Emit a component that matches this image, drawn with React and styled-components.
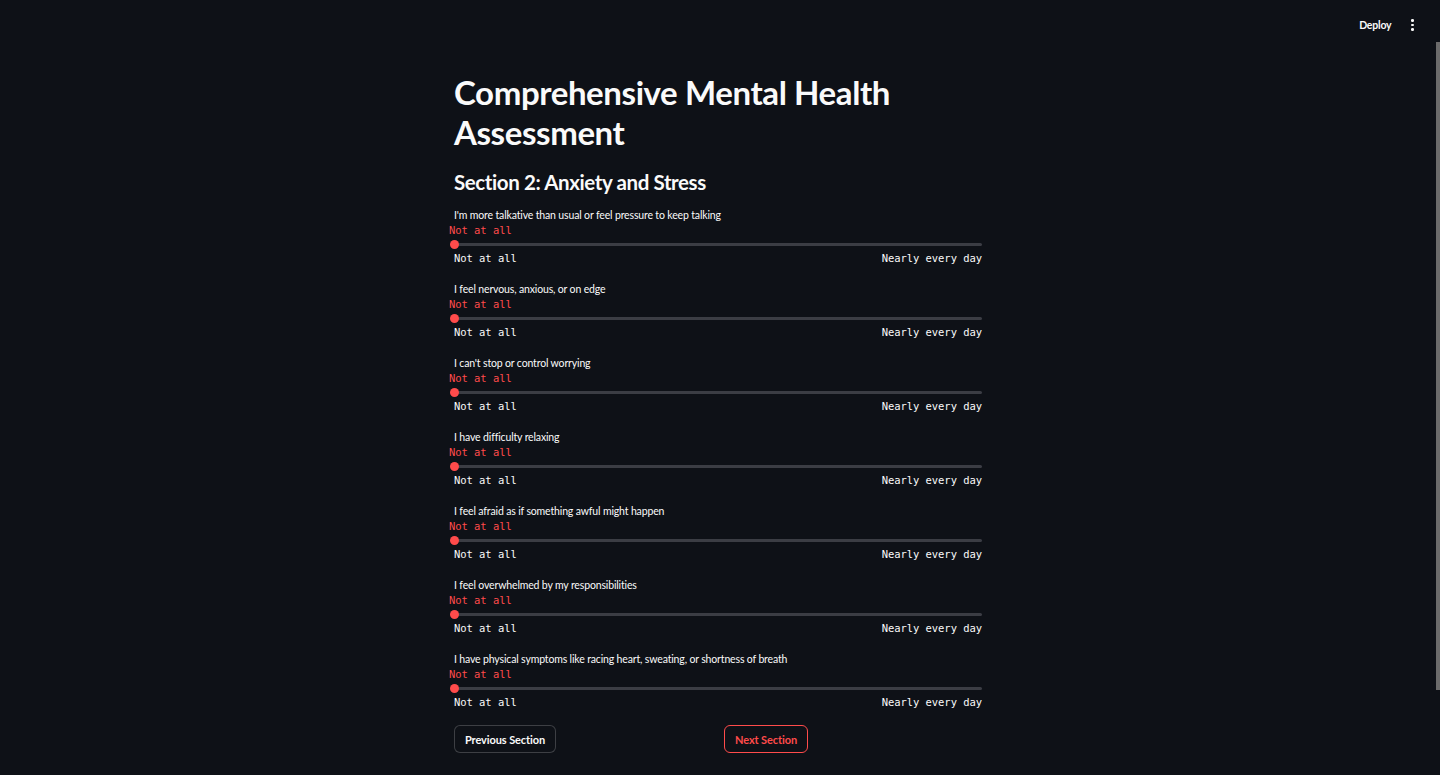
import React from "react";
import styled, { createGlobalStyle } from "styled-components";

const GlobalStyle = createGlobalStyle`
  html, body {
    margin: 0;
    padding: 0;
    background: #0e1117;
    overflow: hidden;
  }
  * {
    box-sizing: border-box;
  }
`;

const Page = styled.div`
  position: relative;
  width: 1440px;
  height: 775px;
  background: #0e1117;
  color: #fafafa;
  font-family: Lato, "Noto Sans", sans-serif;
  overflow: hidden;
`;

const Header = styled.header`
  height: 50px;
  display: flex;
  align-items: center;
  justify-content: flex-end;
  padding-right: 22px;
  gap: 16px;
  background: #0e1117;
`;

const DeployButton = styled.span`
  font-size: 10.5px;
  font-weight: 700;
  color: #fafafa;
  letter-spacing: -0.2px;
`;

const Kebab = styled.span`
  display: flex;
  flex-direction: column;
  gap: 2px;
  padding: 4px;
  span {
    width: 2.6px;
    height: 2.6px;
    border-radius: 50%;
    background: #fafafa;
  }
`;

const Scrollbar = styled.div`
  position: absolute;
  right: 0;
  top: 42px;
  width: 4px;
  height: 648px;
  background: #6b6b6b;
`;

const Content = styled.div`
  width: 1436px;
`;

const Main = styled.main`
  width: 528px;
  margin: 0 auto;
  padding-top: 22px;
`;

const Title = styled.h1`
  margin: 0;
  font-size: 33px;
  line-height: 40px;
  font-weight: 700;
  letter-spacing: -0.4px;
`;

const Subtitle = styled.h2`
  margin: 16px 0 12px;
  font-size: 20.5px;
  line-height: 28px;
  font-weight: 700;
  letter-spacing: -0.4px;
`;

const Question = styled.div`
  margin-bottom: 16px;
`;

const Label = styled.div`
  font-size: 10.5px;
  line-height: 15px;
  height: 15px;
  color: #fafafa;
  white-space: nowrap;
  letter-spacing: -0.15px;
`;

const Mono = styled.span`
  font-family: "DejaVu Sans Mono", "Liberation Mono", monospace;
  font-size: 10.5px;
  line-height: 15px;
  letter-spacing: -0.05px;
`;

const Value = styled(Mono)`
  display: block;
  color: #ff4b4b;
  margin-left: -5px;
  height: 14px;
  line-height: 14px;
`;

const Track = styled.div`
  position: relative;
  height: 14px;
  display: flex;
  align-items: center;
`;

const Rail = styled.div`
  flex: 1;
  height: 3px;
  border-radius: 2px;
  background: #3b3d44;
`;

const Thumb = styled.div`
  position: absolute;
  left: -4.5px;
  top: 2.5px;
  width: 9px;
  height: 9px;
  border-radius: 50%;
  background: #ff4b4b;
`;

const Ends = styled.div`
  display: flex;
  justify-content: space-between;
  color: #fafafa;
  height: 15px;
  line-height: 16px;
`;

const Columns = styled.div`
  display: grid;
  grid-template-columns: 1fr 1fr;
  gap: 12px;
  margin-top: -1px;
`;

const Button = styled.button`
  justify-self: start;
  height: 28px;
  padding: 0 10px;
  border-radius: 6px;
  background: #0e1117;
  font-family: Lato, "Noto Sans", sans-serif;
  font-size: 11px;
  font-weight: 700;
  letter-spacing: -0.1px;
  color: ${(p) => (p.active ? "#ff4b4b" : "#fafafa")};
  border: 1px solid ${(p) => (p.active ? "#ff4b4b" : "rgba(250, 250, 250, 0.2)")};
`;

const questions = [
  "I'm more talkative than usual or feel pressure to keep talking",
  "I feel nervous, anxious, or on edge",
  "I can't stop or control worrying",
  "I have difficulty relaxing",
  "I feel afraid as if something awful might happen",
  "I feel overwhelmed by my responsibilities",
  "I have physical symptoms like racing heart, sweating, or shortness of breath",
];

function SliderQuestion({ label }) {
  return (
    <Question>
      <Label>{label}</Label>
      <Value>Not at all</Value>
      <Track>
        <Rail />
        <Thumb />
      </Track>
      <Ends>
        <Mono>Not at all</Mono>
        <Mono>Nearly every day</Mono>
      </Ends>
    </Question>
  );
}

export default function App() {
  return (
    <Page>
      <GlobalStyle />
      <Header>
        <DeployButton>Deploy</DeployButton>
        <Kebab>
          <span />
          <span />
          <span />
        </Kebab>
      </Header>
      <Scrollbar />
      <Content>
        <Main>
          <Title>Comprehensive Mental Health Assessment</Title>
          <Subtitle>Section 2: Anxiety and Stress</Subtitle>
          {questions.map((q) => (
            <SliderQuestion key={q} label={q} />
          ))}
          <Columns>
            <Button>Previous Section</Button>
            <Button active>Next Section</Button>
          </Columns>
        </Main>
      </Content>
    </Page>
  );
}
